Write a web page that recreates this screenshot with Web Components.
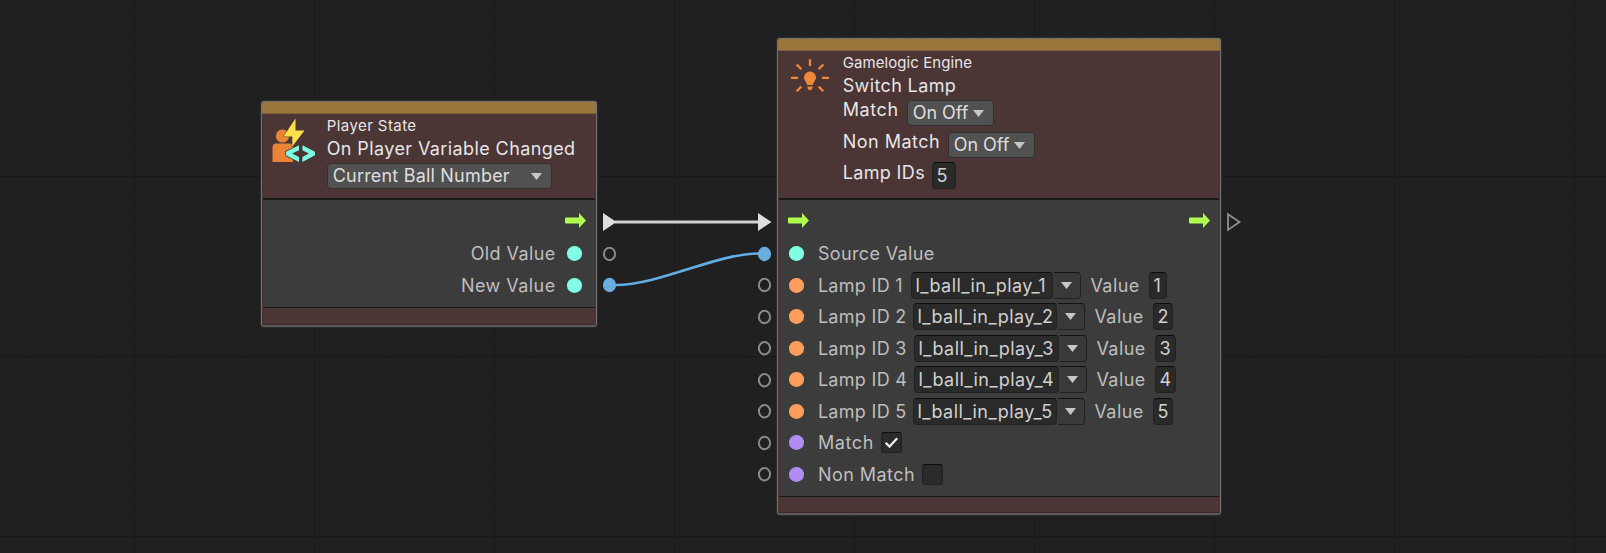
<!DOCTYPE html>
<html lang="en">
<head>
<meta charset="utf-8">
<title>Visual Scripting Graph</title>
<style>
html,body{margin:0;height:100%;overflow:hidden;background:#202020}
body{font:18px/24px Inter,"Liberation Sans",sans-serif;color:#bebebe}
graph-node.event{left:261px;top:101px;width:336px;height:226px}
graph-node.action{left:777px;top:38px;width:444px;height:477px}
</style>
</head>
<body>
<graph-canvas>
  <graph-node class="event">
    <graph-icon slot="icon" name="player"></graph-icon>
    <text-label slot="kicker" track=".43">Player State</text-label>
    <text-label slot="title" track=".4">On Player Variable Changed</text-label>
    <drop-down slot="fields" style="width:224.5px;margin:3px 0 0 .5px" track=".2">Current Ball Number</drop-down>
    <node-row kind="control" end></node-row>
    <node-row kind="object" end><text-label track=".4">Old Value</text-label></node-row>
    <node-row kind="object" end><text-label track=".45">New Value</text-label></node-row>
  </graph-node>

  <graph-node class="action">
    <graph-icon slot="icon" name="lamp"></graph-icon>
    <text-label slot="kicker" track=".08">Gamelogic Engine</text-label>
    <text-label slot="title" track=".37">Switch Lamp</text-label>
    <header-row slot="fields" style="height:31px"><text-label track=".6" style="width:64.6px">Match</text-label><drop-down style="width:86.6px" track="-.05">On Off</drop-down></header-row>
    <header-row slot="fields" style="height:33px"><text-label track=".5" style="width:105.6px">Non Match</text-label><drop-down style="width:86.6px" track="-.05">On Off</drop-down></header-row>
    <header-row slot="fields" style="height:29px"><text-label track=".36" style="width:89.3px">Lamp IDs</text-label><value-field style="width:24px">5</value-field></header-row>
    <node-row kind="control" both></node-row>
    <node-row kind="object"><text-label track=".36">Source Value</text-label></node-row>
    <lamp-row number="1" style="--label:93px;--field:142px;--value:18px"></lamp-row>
    <lamp-row number="2" style="--label:95px;--field:144px;--value:20px"></lamp-row>
    <lamp-row number="3" style="--label:96px;--field:145px;--value:21px"></lamp-row>
    <lamp-row number="4" style="--label:96px;--field:145px;--value:21px"></lamp-row>
    <lamp-row number="5" style="--label:95px;--field:144px;--value:20px"></lamp-row>
    <node-row kind="boolean"><text-label track=".6" style="width:63px">Match</text-label><check-box checked></check-box></node-row>
    <node-row kind="boolean"><text-label track=".45" style="width:104px">Non Match</text-label><check-box></check-box></node-row>
  </graph-node>
</graph-canvas>

<script>
const define = (name, render) => customElements.define(name, class extends HTMLElement {
  constructor() {
    super();
    this.attachShadow({ mode: 'open' });
  }
  connectedCallback() {
    this.shadowRoot.innerHTML = render(this);
  }
});

const ring = (x, y) => `<ellipse cx="${x}" cy="${y}" rx="5.6" ry="6.2" fill="none" stroke="#8a8a8a" stroke-width="2"/>`;

define('graph-canvas', () => `
<style>
:host{display:block;position:relative;width:100%;height:100vh;overflow:hidden;background-color:#202020;
  background-image:linear-gradient(90deg,#1a1a1a 1px,transparent 1px),linear-gradient(#191919 1px,transparent 1px),
    linear-gradient(90deg,#1f1f1f 1px,transparent 1px),linear-gradient(#1f1f1f 1px,transparent 1px);
  background-size:180px 180px,180px 180px,18px 18px,18px 18px;
  background-position:134px 0,0 176px,8px 0,0 14px}
svg{position:absolute;inset:0;width:1606px;height:553px}
</style>
<svg viewBox="0 0 1606 553">
  <path d="M615 222H759" stroke="#d2d2d2" stroke-width="3"/>
  <path d="M603 213L616.5 222L603 231ZM758 213L771.5 222L758 231Z" fill="#dedede"/>
  <path d="M616 285C660 285 716 253.5 759 253.5" fill="none" stroke="#62aee2" stroke-width="2.6"/>
  <g fill="#69aedf"><ellipse cx="609.5" cy="285" rx="6.6" ry="7.2"/><ellipse cx="764.5" cy="254" rx="6.6" ry="7.2"/></g>
  <path d="M1228 214.3L1239.5 222L1228 229.9Z" fill="none" stroke="#8f8f8f" stroke-width="1.8"/>
  ${ring(609.5, 254)}${[285, 317, 348.3, 380.2, 411.3, 443, 474.3].map(y => ring(764.5, y)).join('')}
</svg>
<slot></slot>`);

define('graph-node', () => `
<style>
:host{position:absolute;display:flex;flex-direction:column;box-sizing:border-box;border:1px solid #707070;
  border-bottom:2px solid #5a5a5a;border-radius:3px;background:#4c3535;overflow:hidden;box-shadow:0 0 0 .5px #3a3a3a}
.bar{height:12px;box-sizing:border-box;background:#99763b;border-bottom:1px solid #7d5f38;flex:none}
header{flex:none;display:grid;grid-template-columns:64.7px 1fr;box-sizing:border-box;color:#e6e6e6;height:84px}
:host(.action) header{height:147px}
.text{display:flex;flex-direction:column;align-items:flex-start;padding-top:2px}
slot[name=kicker]{display:block;font-size:15px;line-height:20px;height:20px}
slot[name=title]{display:block;height:24px}
slot[name=title]::slotted(*){line-height:26px}
main{flex:1;background:#3c3c3c;border-top:2px solid #1b1b1b;border-bottom:1px solid #1b1b1b;margin:0 1px}
footer{flex:none;height:17px;box-sizing:border-box;border-bottom:1px solid #3c2a2a}
:host(.action) footer{height:16px}
</style>
<div class="bar"></div>
<header><slot name="icon"></slot><div class="text"><slot name="kicker"></slot><slot name="title"></slot><slot name="fields"></slot></div></header>
<main><slot></slot></main><footer></footer>`);

define('text-label', el => `
<style>:host{display:block;flex:none;white-space:nowrap;letter-spacing:${el.getAttribute('track') || 0}px}</style><slot></slot>`);

define('header-row', () => `
<style>:host{display:flex;align-items:center}::slotted(text-label){padding-bottom:6px}</style><slot></slot>`);

define('drop-down', el => `
<style>
:host{display:flex;flex:none;box-sizing:border-box;height:26px;align-items:center;justify-content:space-between;
  padding:0 8.5px 0 4.5px;background:#515151;border:1px solid #303030;border-radius:4px;color:#dedede;line-height:24px;white-space:nowrap}
span{letter-spacing:${el.getAttribute('track') || 0}px}
svg{width:11px;height:7px;flex:none;margin-top:1px}
</style>
<span><slot></slot></span><svg viewBox="0 0 11 7"><path d="M0 0H11L5.5 7Z" fill="#c6c6c6"/></svg>`);

define('value-field', el => `
<style>
:host{display:block;flex:none;box-sizing:border-box;height:27px;line-height:26px;padding-left:3.5px;background:#2a2a2a;
  border:1px solid #212121;border-top-color:#0d0d0d;border-radius:4px;color:#d0d0d0;white-space:nowrap;letter-spacing:${el.getAttribute('track') || 0}px}
</style><slot></slot>`);

define('menu-button', () => `
<style>
:host{display:flex;flex:none;box-sizing:border-box;width:27px;height:27px;align-items:center;justify-content:center;
  background:#393939;border:1px solid #212121;border-left:0;border-top-color:#121212;border-radius:0 4px 4px 0}
svg{width:11px;height:7px}
</style><svg viewBox="0 0 11 7"><path d="M0 0H11L5.5 7Z" fill="#c6c6c6"/></svg>`);

define('check-box', el => `
<style>
:host{display:block;flex:none;box-sizing:border-box;width:21px;height:21px;background:#2a2a2a;border:1px solid #212121;border-top-color:#0d0d0d;border-radius:3px}
svg{display:block;width:19px;height:19px}
</style>${el.hasAttribute('checked') ? '<svg viewBox="0 0 19 19"><path d="M3.7 9.7L7.5 13.5L15.2 5.3" fill="none" stroke="#ececec" stroke-width="2.3"/></svg>' : '<svg></svg>'}`);

define('port-glyph', el => {
  const kind = el.getAttribute('kind');
  const fill = { object: '#80ffe4', string: '#ff9e5c', boolean: '#b18df2' }[kind];
  return kind === 'control'
    ? `<style>:host{display:block;flex:none;width:21px;height:15px}svg{display:block}</style>
       <svg width="21" height="15" viewBox="0 0 21 15"><path d="M1 4.5H14V0L21 7.5L14 15V10.5H1Q0 10.5 0 9.5V5.5Q0 4.5 1 4.5Z" fill="#b0ff4e"/></svg>`
    : `<style>:host{display:block;flex:none;width:14.6px;height:14.6px;border-radius:50%;background:${fill}}</style>`;
});

define('node-row', el => {
  const kind = el.getAttribute('kind'), control = kind === 'control';
  const glyph = `<port-glyph kind="${kind}"></port-glyph>`;
  const end = el.hasAttribute('end'), both = el.hasAttribute('both');
  return `<style>
:host{display:flex;align-items:center;box-sizing:border-box;height:${control ? 38 : 31.5}px;
  padding:${control ? '3px 8.7px 0 8.5px' : '0 13.3px 0 10.3px'};justify-content:${both ? 'space-between' : end ? 'flex-end' : 'flex-start'}}
::slotted(text-label){padding-top:1px}
::slotted(text-label:${end ? 'last-child' : 'first-child'}){${end ? 'margin-right:11.5px' : 'margin-left:14px'}}
</style>${end ? '<slot></slot>' + glyph : both ? glyph + glyph : glyph + '<slot></slot>'}`;
});

define('lamp-row', el => {
  const n = el.getAttribute('number');
  return `<style>
:host{display:block}
.name{width:var(--label)}.id{width:var(--field);margin-right:1px}.caption{width:58.5px;margin-left:9.5px}.value{width:var(--value)}
</style>
<node-row kind="string"><text-label class="name" track=".3">Lamp ID ${n}</text-label><value-field class="id" track=".45">l_ball_in_play_${n}</value-field><menu-button></menu-button><text-label class="caption" track=".45">Value</text-label><value-field class="value">${n}</value-field></node-row>`;
});

define('graph-icon', el => el.getAttribute('name') === 'player'
  ? `<style>:host{display:block;padding:4px 0 0 9px}svg{display:block}</style>
<svg width="46" height="46" viewBox="271 118 46 46">
  <path d="M272.5 162V147.5Q272.5 143.5 276.5 143.5H289Q293 143.5 293 147.5V162Z" fill="#ec8438"/>
  <circle cx="282.5" cy="136" r="6.6" fill="#ec8438"/>
  <path d="M295.5 118.5L283.5 136.5H292.3V146.5L304.5 130.5H295.5Z" fill="#ffe04a" stroke="#4c3535" stroke-width=".8" paint-order="stroke"/>
  <path d="M299 145.3L286 151.7V155.3L299 162V157L292.2 153.5L299 150.2ZM302.4 145.3L315 151.7V155.3L302.4 162V157L308.9 153.5L302.4 150.2Z" fill="#7dfce4" stroke="#4c3535" stroke-width="1.4" paint-order="stroke"/>
</svg>`
  : `<style>:host{display:block;padding:7px 0 0 12px}svg{display:block}</style>
<svg width="40" height="36" viewBox="790 58 40 36">
  <g stroke="#f0883c" stroke-width="2.3" fill="none"><path d="M810 59.2V66M791 77.8H798M822 77.8H829M796.7 64.5L801.3 69.2M823.3 64.5L818.7 69.2M796.7 91.3L801.3 86.6M823.3 91.3L818.7 86.6"/></g>
  <path d="M810 71.4A6 6 0 0 1 816 77.4C816 80.5 813.3 81.6 812.8 85H807.2C806.7 81.6 804 80.5 804 77.4A6 6 0 0 1 810 71.4ZM807.4 86.4H812.6V88L811.2 90H808.8L807.4 88Z" fill="#f0883c"/>
</svg>`);
</script>
</body>
</html>
